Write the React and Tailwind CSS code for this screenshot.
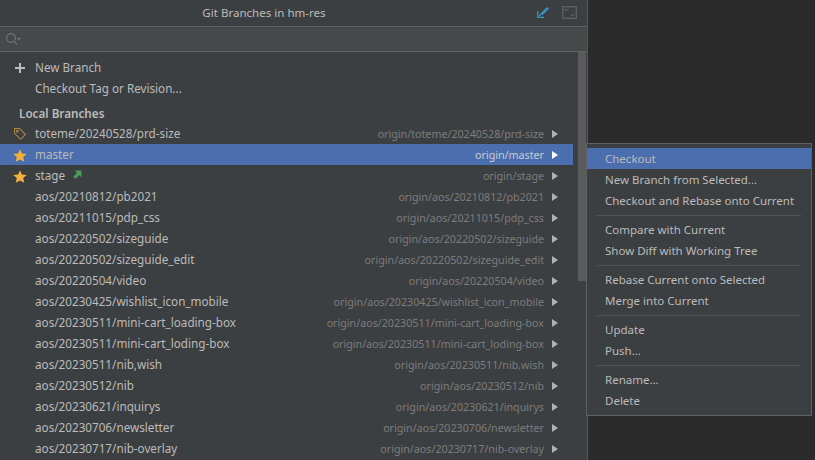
import React from 'react';

const branches = [
  ['toteme/20240528/prd-size', 'origin/toteme/20240528/prd-size', 'tag'],
  ['master', 'origin/master', 'star'],
  ['stage', 'origin/stage', 'star'],
  ['aos/20210812/pb2021', 'origin/aos/20210812/pb2021'],
  ['aos/20211015/pdp_css', 'origin/aos/20211015/pdp_css'],
  ['aos/20220502/sizeguide', 'origin/aos/20220502/sizeguide'],
  ['aos/20220502/sizeguide_edit', 'origin/aos/20220502/sizeguide_edit'],
  ['aos/20220504/video', 'origin/aos/20220504/video'],
  ['aos/20230425/wishlist_icon_mobile', 'origin/aos/20230425/wishlist_icon_mobile'],
  ['aos/20230511/mini-cart_loading-box', 'origin/aos/20230511/mini-cart_loading-box'],
  ['aos/20230511/mini-cart_loding-box', 'origin/aos/20230511/mini-cart_loding-box'],
  ['aos/20230511/nib,wish', 'origin/aos/20230511/nib,wish'],
  ['aos/20230512/nib', 'origin/aos/20230512/nib'],
  ['aos/20230621/inquirys', 'origin/aos/20230621/inquirys'],
  ['aos/20230706/newsletter', 'origin/aos/20230706/newsletter'],
  ['aos/20230717/nib-overlay', 'origin/aos/20230717/nib-overlay'],
];

const menuGroups = [
  ['Checkout', 'New Branch from Selected...', 'Checkout and Rebase onto Current'],
  ['Compare with Current', 'Show Diff with Working Tree'],
  ['Rebase Current onto Selected', 'Merge into Current'],
  ['Update', 'Push...'],
  ['Rename...', 'Delete'],
];

const Star = () => (
  <svg width="14" height="13" viewBox="0 0 14 13">
    <path d="M7 .2l1.9 4.2 4.8.5-3.5 3.1 1 4.7L7 10.4l-4.2 2.3 1-4.7L.3 4.9l4.8-.5z" fill="#f4af3d" />
  </svg>
);

const Tag = () => (
  <svg width="14" height="14" viewBox="0 0 14 14" fill="none" stroke="#a98545" strokeWidth="1.1">
    <path d="M1.5 1.5h5l6 6-4.8 4.8-6.2-6z" />
    <circle cx="4.2" cy="4.2" r="0.9" />
  </svg>
);

const Row = ({ name, remote, icon, selected }) => (
  <div className={`flex h-[21px] items-center pt-px ${selected ? 'bg-[#4b6eaf]' : ''}`}>
    <div className="flex w-[35px] shrink-0 justify-end pr-[8px]">
      {icon === 'star' && <Star />}
      {icon === 'tag' && <Tag />}
    </div>
    <span className="text-[#bbbbbb]">{name}</span>
    {name === 'stage' && (
      <svg className="mb-[3px] ml-[8px]" width="9" height="9" viewBox="0 0 10 10" fill="#499c54">
        <path d="M2 .6h7.4V8L7 5.8 2.8 10 .2 7.4 4.4 3.2z" />
      </svg>
    )}
    <span className={`ml-auto text-[10.7px] ${selected ? 'text-[#c9ccd2]' : 'text-[#7c7c7c]'}`}>{remote}</span>
    <svg className="ml-[8px] mr-[15px]" width="6" height="8" viewBox="0 0 6 8" fill={selected ? '#ffffff' : '#afb1b3'}>
      <path d="M0 0l6 4-6 4z" />
    </svg>
  </div>
);

export default function App() {
  return (
    <div className="relative flex h-[460px] w-[815px] overflow-hidden bg-[#2b2b2b] font-['Noto_Sans',sans-serif] text-[11.7px] leading-none">
      <div className="flex w-[588px] shrink-0 flex-col border-r border-[#555759] bg-[#3c3f41]">
        <div className="relative flex h-[27px] shrink-0 items-center justify-center border-b border-[#5f6163] pr-[59px] text-[11.55px] text-[#bbbbbb]">
          <span>Git Branches in hm-res</span>
          <div className="absolute right-[10px] top-[6px] flex items-start gap-[12px]">
            <svg width="13" height="12" viewBox="0 0 13 12" fill="none" stroke="#3592c4" strokeWidth="1.3">
              <path d="M.7 5v6.3H7" />
              <path d="M2 10l2-2" />
              <path d="M4.5 8.3L11 1.8" strokeWidth="2.6" />
            </svg>
            <svg width="15" height="13" viewBox="0 0 15 13" fill="none" stroke="#5c5f61" strokeWidth="1.4">
              <rect x="0.7" y="0.7" width="13.6" height="11.6" />
              <path d="M3.5 3.5h3M3.5 3.5v2M11.5 9.5h-3M11.5 9.5v-2" strokeWidth="1" />
            </svg>
          </div>
        </div>
        <div className="flex h-[25px] shrink-0 items-center border-b border-[#5f6163] bg-[#45494a] pl-[6px]">
          <svg width="16" height="14" viewBox="0 0 16 14" fill="none" stroke="#74777a" strokeWidth="1.1">
            <circle cx="5" cy="6" r="4.4" />
            <path d="M8.2 9.4l3 3" />
            <path d="M11 6h4l-2 2.4z" fill="#74777a" stroke="none" />
          </svg>
        </div>
        <div className="relative flex-1 overflow-hidden">
          <div className="w-[573px] pt-[5px]">
            <div className="flex h-[21px] items-center pt-px text-[#bbbbbb]">
              <div className="flex w-[35px] shrink-0 justify-end pr-[9px]">
                <svg width="12" height="12" viewBox="0 0 12 12" fill="#bbbbbb">
                  <path d="M5 1h2v4h4v2H7v4H5V7H1V5h4z" />
                </svg>
              </div>
              New Branch
            </div>
            <div className="flex h-[21px] items-center pl-[35px] pt-px text-[#bbbbbb]">Checkout Tag or Revision...</div>
            <div className="flex h-[24px] items-center pl-[19px] pt-[5px] font-semibold text-[#bbbbbb]">Local Branches</div>
            {branches.map(([name, remote, icon]) => (
              <Row key={name} name={name} remote={remote} icon={icon} selected={name === 'master'} />
            ))}
          </div>
          <div className="absolute right-[1px] top-0 h-[229px] w-[8px] bg-[#595b5d]" />
        </div>
      </div>
      <div className="absolute left-[586px] top-[143px] w-[226px] border border-[#5f6163] bg-[#3c3f41] py-[4px] text-[11.5px] text-[#bbbbbb]">
        {menuGroups.map((group, i) => (
          <div key={group[0]}>
            {i > 0 && <div className="mx-[10px] my-[3.5px] h-px bg-[#515355]" />}
            {group.map((item) => (
              <div
                key={item}
                className={`flex h-[21px] items-center pl-[18px] pt-px ${item === 'Checkout' ? 'bg-[#4b6eaf]' : ''}`}
              >
                {item}
              </div>
            ))}
          </div>
        ))}
      </div>
    </div>
  );
}
